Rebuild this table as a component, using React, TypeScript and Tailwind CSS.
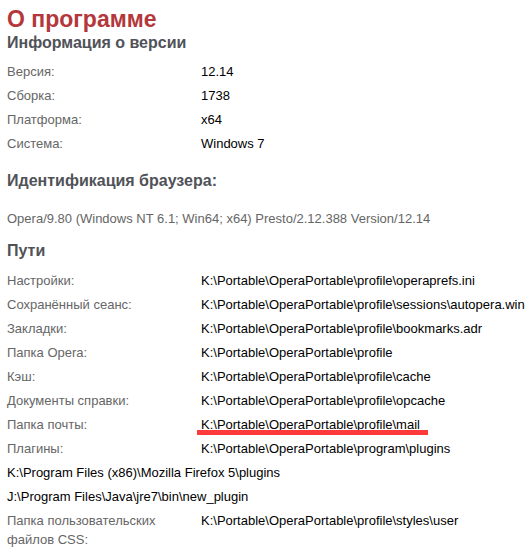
const versionRows = [
  ["Версия:", "12.14"],
  ["Сборка:", "1738"],
  ["Платформа:", "x64"],
  ["Система:", "Windows 7"],
];

const pathRows = [
  ["Настройки:", "K:\\Portable\\OperaPortable\\profile\\operaprefs.ini"],
  ["Сохранённый сеанс:", "K:\\Portable\\OperaPortable\\profile\\sessions\\autopera.win"],
  ["Закладки:", "K:\\Portable\\OperaPortable\\profile\\bookmarks.adr"],
  ["Папка Opera:", "K:\\Portable\\OperaPortable\\profile"],
  ["Кэш:", "K:\\Portable\\OperaPortable\\profile\\cache"],
  ["Документы справки:", "K:\\Portable\\OperaPortable\\profile\\opcache"],
];

const Row = ({ label, value, marked }: { label: string; value: string; marked?: boolean }) => (
  <div className="flex py-[2.5px] leading-[19px]">
    <div className="w-[194px] shrink-0 pr-2 text-[#666666]">{label}</div>
    <div className="relative text-black whitespace-nowrap">
      {value}
      {marked && <div className="absolute left-[-4px] top-[15px] h-[5px] w-[231px] bg-[#ff3a3a]" />}
    </div>
  </div>
);

const App = () => {
  return (
    <div
      className="bg-white h-[559px] overflow-hidden pl-[7px] text-[13px]"
      style={{ fontFamily: '"Liberation Sans", Arial, sans-serif' }}
    >
      <h1 className="pt-[5px] text-[23px] leading-[28px] font-bold text-[#b3373b]">О программе</h1>
      <h2 className="text-[16px] leading-[20px] font-bold text-[#505258]">Информация о версии</h2>
      <div className="mt-[6.5px]">
        {versionRows.map(([l, v]) => (
          <Row key={l} label={l} value={v} />
        ))}
      </div>

      <h2 className="mt-[15px] text-[16px] leading-[20px] font-bold text-[#505258]">Идентификация браузера:</h2>
      <div className="mt-[15.5px] py-[2.5px] leading-[19px] text-[#666666]">
        Opera/9.80 (Windows NT 6.1; Win64; x64) Presto/2.12.388 Version/12.14
      </div>

      <h2 className="mt-[10.5px] text-[16px] leading-[20px] font-bold text-[#505258]">Пути</h2>
      <div className="mt-[7.5px]">
        {pathRows.map(([l, v]) => (
          <Row key={l} label={l} value={v} />
        ))}
        <Row label="Папка почты:" value="K:\Portable\OperaPortable\profile\mail" marked />
        <Row label="Плагины:" value="K:\Portable\OperaPortable\program\plugins" />
        <div className="py-[2.5px] leading-[19px] text-black">K:\Program Files (x86)\Mozilla Firefox 5\plugins</div>
        <div className="py-[2.5px] leading-[19px] text-black">J:\Program Files\Java\jre7\bin\new_plugin</div>
        <Row label="Папка пользовательских файлов CSS:" value="K:\Portable\OperaPortable\profile\styles\user" />
      </div>
    </div>
  );
};

export default App;
